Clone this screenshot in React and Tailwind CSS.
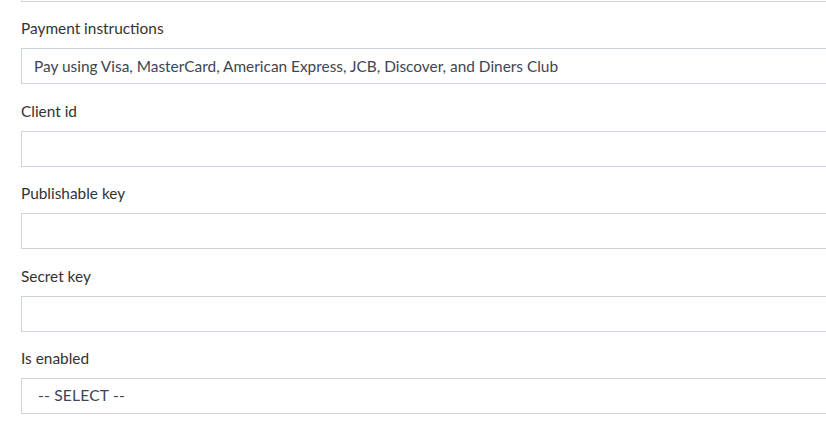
import React from "react";

const fields = [
  { label: "Payment instructions", value: "Pay using Visa, MasterCard, American Express, JCB, Discover, and Diners Club" },
  { label: "Client id", value: "" },
  { label: "Publishable key", value: "" },
  { label: "Secret key", value: "" },
];

const inputCls =
  "block w-full h-[36px] px-[12px] border border-[#cdd3da] bg-white text-[15.4px] text-[#3d4651] outline-none";

const App = () => {
  return (
    <div
      className="w-[826px] h-[434px] overflow-hidden bg-white text-[#333]"
      style={{ fontFamily: "Lato, 'Noto Sans', sans-serif" }}
    >
      <div className="w-[900px] pl-[21px]">
        {/* previous field, scrolled mostly out of view */}
        <div className="-mt-[34px] mb-[15px] h-[36px] border border-[#d4d4d4]" />

        {fields.map((f) => (
          <div key={f.label} className="mb-[15.5px]">
            <label className="block text-[15.4px] leading-[23px] mb-[8px]">{f.label}</label>
            <input className={inputCls} defaultValue={f.value} readOnly />
          </div>
        ))}

        <div>
          <label className="block text-[15.4px] leading-[23px] mb-[8px]">Is enabled</label>
          <select className="block w-full h-[36px] pl-[16px] border border-[#cdd3da] bg-white text-[15.6px] tracking-[0.2px] text-[#3d4651] outline-none appearance-none">
            <option>-- SELECT --</option>
          </select>
        </div>
      </div>
    </div>
  );
};

export default App;
